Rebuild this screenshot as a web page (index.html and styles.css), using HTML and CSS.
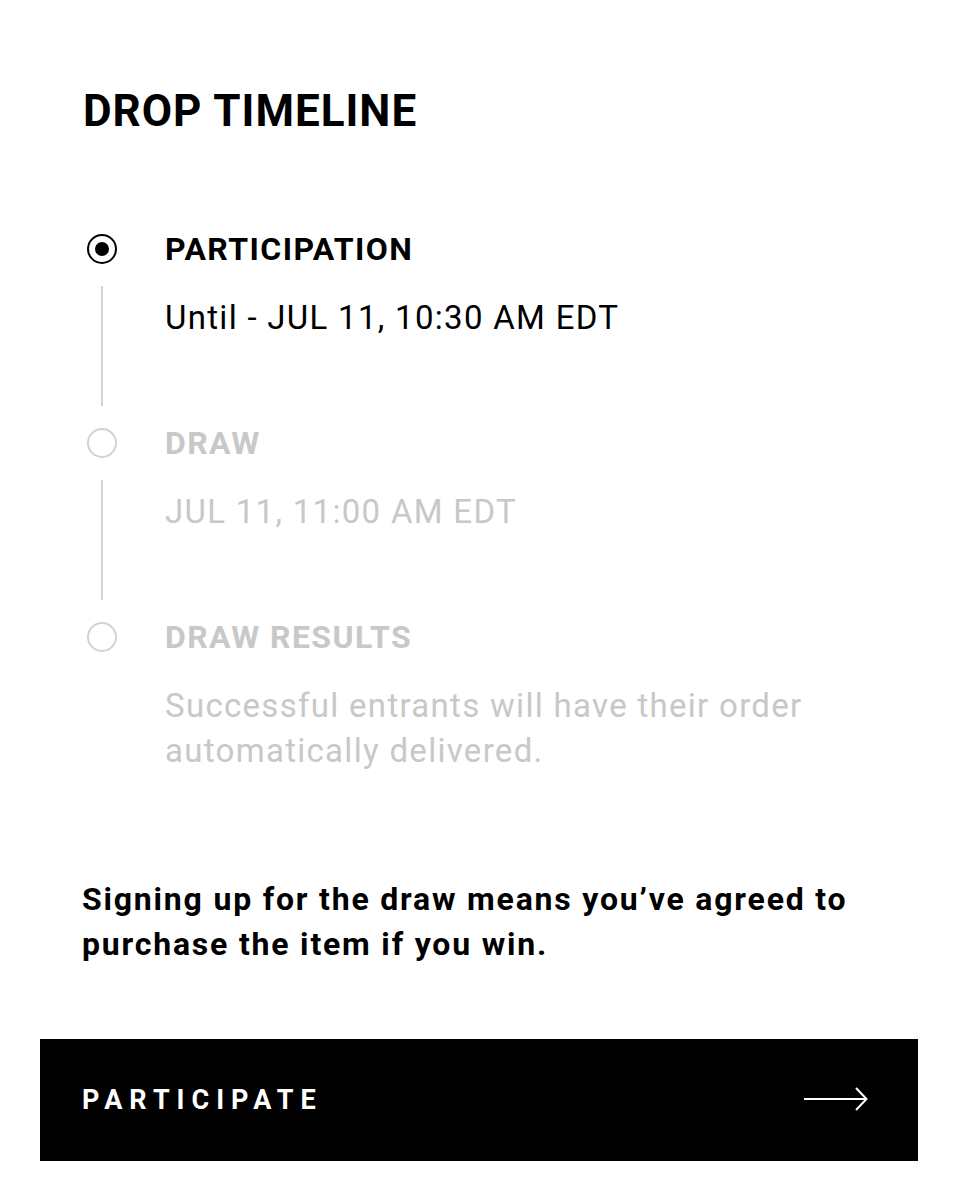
FILE: index.html
```html
<!DOCTYPE html>
<html lang="en">
<head>
  <meta charset="UTF-8" />
  <meta name="viewport" content="width=device-width, initial-scale=1.0"/>
  <title>Drop Timeline</title>
  <link rel="stylesheet" href="styles.css">
</head>
<body>

  <!-- DROP TIMELINE -->
  <section class="drop">
    <h1 class="drop-title">DROP TIMELINE</h1>

    <ol class="timeline">
      <li class="step active">
        <div class="step-marker">
          <span class="radio"></span>
          <span class="rail"></span>
        </div>
        <div class="step-body">
          <h2 class="step-title">PARTICIPATION</h2>
          <p class="step-text">Until - JUL 11, 10:30 AM EDT</p>
        </div>
      </li>
      <li class="step">
        <div class="step-marker">
          <span class="radio"></span>
          <span class="rail"></span>
        </div>
        <div class="step-body">
          <h2 class="step-title">DRAW</h2>
          <p class="step-text">JUL 11, 11:00 AM EDT</p>
        </div>
      </li>
      <li class="step last">
        <div class="step-marker">
          <span class="radio"></span>
        </div>
        <div class="step-body">
          <h2 class="step-title">DRAW RESULTS</h2>
          <p class="step-text">Successful entrants will have their order automatically delivered.</p>
        </div>
      </li>
    </ol>

    <p class="notice">Signing up for the draw means you’ve agreed to purchase the item if you win.</p>
  </section>

  <button class="cta" type="button">
    <span>PARTICIPATE</span>
    <svg class="cta-arrow" width="64" height="28" viewBox="0 0 64 28" fill="none" stroke="#fff" stroke-width="2">
      <path d="M0 13 H62"/>
      <path d="M52 2 L62.5 13 L52 24"/>
    </svg>
  </button>

</body>
</html>
```

FILE: styles.css
```css
* {
  box-sizing: border-box;
  margin: 0;
  padding: 0;
}
body {
  background: #fff;
  color: #000;
  font-family: Roboto, "Liberation Sans", sans-serif;
  width: 960px;
}

/* === SECCION === */
.drop {
  padding: 84px 40px 0 83px;
}
.drop-title {
  font-size: 44px;
  line-height: 54px;
  font-weight: 700;
  letter-spacing: 1px;
}

/* === TIMELINE === */
.timeline {
  list-style: none;
  margin-top: 96px;
}
.step {
  display: flex;
}
.step-marker {
  width: 82px;
  display: flex;
  flex-direction: column;
  align-items: flex-start;
  padding-left: 4px;
}
.radio {
  width: 30px;
  height: 30px;
  border: 2px solid #d2d2d2;
  border-radius: 50%;
  position: relative;
}
.step.active .radio {
  border-color: #000;
}
.step.active .radio::after {
  content: "";
  position: absolute;
  left: 6px;
  top: 6px;
  width: 14px;
  height: 14px;
  border-radius: 50%;
  background: #000;
}
.rail {
  flex: 1;
  width: 2px;
  margin: 22px 0 22px 14px;
  background: #d4d4d4;
}
.step-body {
  flex: 1;
  padding-bottom: 88px;
}
.step.last .step-body {
  padding-bottom: 0;
}
.step-title {
  font-size: 32px;
  line-height: 30px;
  font-weight: 700;
  letter-spacing: 1.4px;
  color: #c8c8c8;
}
.step-text {
  margin-top: 31px;
  font-size: 33px;
  line-height: 45px;
  font-weight: 400;
  letter-spacing: 1.3px;
  color: #c8c8c8;
}
.step.active .step-title,
.step.active .step-text {
  color: #000;
}

/* === AVISO === */
.notice {
  margin-top: 104px;
  margin-left: -1px;
  font-size: 32px;
  line-height: 45px;
  font-weight: 700;
  letter-spacing: 1.8px;
  max-width: 800px;
}

/* === BOTON === */
.cta {
  display: flex;
  align-items: center;
  justify-content: space-between;
  width: 878px;
  height: 122px;
  margin: 72px 0 0 40px;
  padding: 0 50px 0 42px;
  background: #000;
  color: #fff;
  border: none;
  font-family: Roboto, "Liberation Sans", sans-serif;
  font-size: 27px;
  font-weight: 700;
  letter-spacing: 7px;
  cursor: pointer;
}
.cta-arrow {
  display: block;
}
```
